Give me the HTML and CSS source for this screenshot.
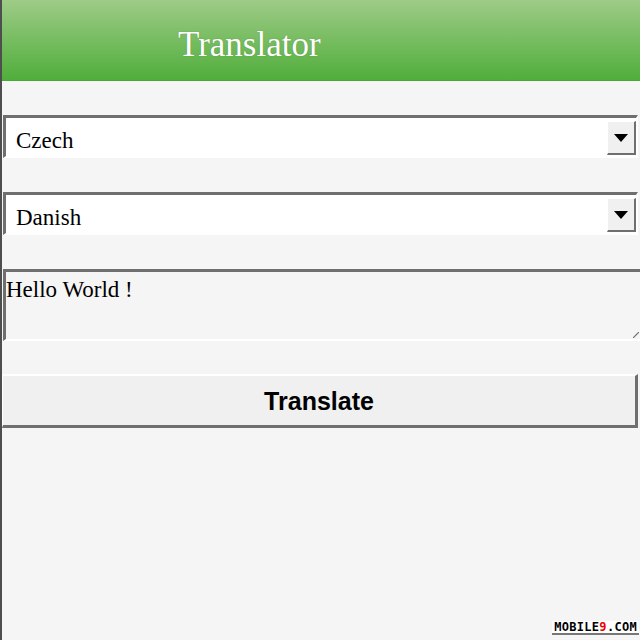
FILE: index.html
```html
<!DOCTYPE HTML>
<html>
<head>
	<meta http-equiv="Content-Type" content="text/html; charset=utf-8">
	<title>Translator</title>
	<link rel="stylesheet" href="styles.css">
</head>
<body>
<div class="page">
	<div class="header">
		<div class="title">Translator</div>
	</div>

	<div class="form">
		<div class="select">
			<span class="value">Czech</span>
			<span class="arrow"><span class="tri"></span></span>
		</div>
		<div class="select">
			<span class="value">Danish</span>
			<span class="arrow"><span class="tri"></span></span>
		</div>
		<div class="textbox">
			<div class="text">Hello World !</div>
			<svg class="grip" width="6" height="6" viewBox="0 0 6 6"><line x1="0" y1="6" x2="6" y2="0" stroke="#6a6a6a" stroke-width="1.2"/></svg>
		</div>
		<div class="button">Translate</div>
	</div>

	<div class="footer">
		<span class="mark">MOBILE<span class="nine">9</span>.COM</span>
	</div>
</div>
</body>
</html>
```

FILE: styles.css
```css
*{
	margin: 0;
	padding: 0;
	box-sizing: border-box;
}
body{
	background: #f5f5f5;
}
.page{
	width: 640px;
	height: 640px;
	border-left: 2px solid #4e4e4e;
	display: flex;
	flex-direction: column;
	background: #f5f5f5;
}

.header{
	height: 81px;
	background: linear-gradient(#9ecb87, #50ae3b);
	border-bottom: 1px solid #4aa836;
	padding-left: 176px;
	padding-top: 24px;
}
.title{
	font-family: "Liberation Serif", serif;
	font-size: 35px;
	line-height: 42px;
	color: #fff;
	text-shadow: 0 0 1px rgba(60,80,40,0.5);
}

.form{
	display: flex;
	flex-direction: column;
	gap: 34px;
	margin-top: 34px;
}

.select{
	height: 43px;
	margin-left: 1px;
	margin-right: 2px;
	background: #fff;
	border-top: 3px solid #6f6f6f;
	border-left: 3px solid #6f6f6f;
	border-right: 2px solid #fff;
	border-bottom: 2px solid #fff;
	display: flex;
	align-items: stretch;
	padding: 3px 0 0 10px;
}
.value{
	flex: 1;
	font-family: "Liberation Serif", serif;
	font-size: 23px;
	line-height: 40px;
	color: #000;
}
.arrow{
	width: 29px;
	height: 34px;
	background: #f0f0f0;
	border-top: 1px solid #fff;
	border-left: 1px solid #fff;
	border-right: 2px solid #6f6f6f;
	border-bottom: 2px solid #6f6f6f;
	display: flex;
	align-items: center;
	justify-content: center;
}
.tri{
	width: 0;
	height: 0;
	border-left: 7px solid transparent;
	border-right: 7px solid transparent;
	border-top: 8px solid #000;
}

.textbox{
	height: 72px;
	margin-left: 1px;
	background: #f5f5f5;
	border-top: 3px solid #6f6f6f;
	border-left: 3px solid #6f6f6f;
	border-bottom: 2px solid #fff;
	display: flex;
	flex-direction: column;
	padding: 5px 1px 1px 0;
}
.text{
	font-family: "Liberation Serif", serif;
	font-size: 23px;
	line-height: 26px;
	color: #000;
}
.grip{
	margin-top: auto;
	align-self: flex-end;
}

.button{
	height: 54px;
	margin-right: 2px;
	margin-top: -1px;
	background: #f0f0f0;
	border-top: 2px solid #fff;
	border-left: 1px solid #fff;
	border-right: 3px solid #6f6f6f;
	border-bottom: 3px solid #6f6f6f;
	font-family: "Liberation Sans", sans-serif;
	font-weight: bold;
	font-size: 25px;
	line-height: 51px;
	text-align: center;
	color: #000;
}

.footer{
	margin-top: auto;
	display: flex;
	justify-content: flex-end;
	padding: 0 1px 5px 0;
}
.mark{
	font-family: "DejaVu Sans Mono", monospace;
	font-weight: bold;
	font-size: 12px;
	line-height: 12px;
	letter-spacing: 0.3px;
	color: #000;
	background: #fff;
	padding: 0 2px;
	border-bottom: 2px solid #777;
}
.nine{
	color: #e00;
}
```
